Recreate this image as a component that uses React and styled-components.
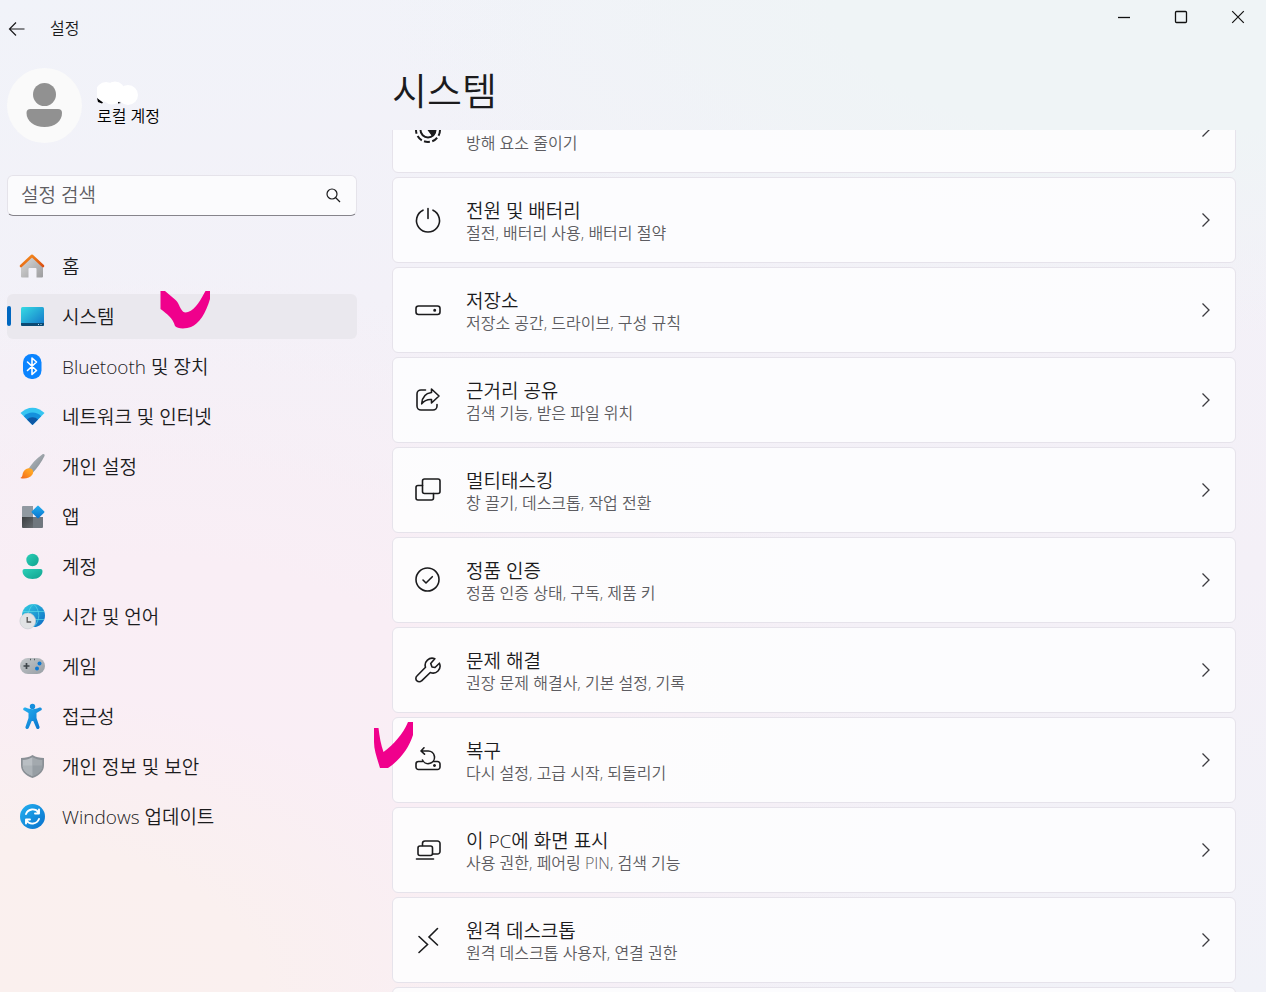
import React, { useEffect, useRef } from 'react';
import styled, { createGlobalStyle } from 'styled-components';

const GlobalStyle = createGlobalStyle`
  * {
    box-sizing: border-box;
  }
  body {
    margin: 0;
    color: #1b1b1d;
    font-family: "Open Sans", "Noto Sans CJK KR", sans-serif;
    font-weight: 350;
  }
  button, input {
    font: inherit;
    color: inherit;
  }
`;

const Window = styled.div`
  position: relative;
  display: flex;
  height: 100vh;
  overflow: hidden;
  background:
    radial-gradient(ellipse 520px 300px at 0% 100%, #faf0ee 0%, #faf0ef 50%, rgba(250, 240, 239, 0) 100%),
    radial-gradient(ellipse 760px 520px at 12% 80%, #faeef5 0%, #f9eef5 45%, rgba(249, 238, 245, 0) 100%),
    radial-gradient(ellipse 760px 340px at 90% 0%, #eff4f6 0%, #eff4f6 40%, rgba(239, 244, 246, 0) 100%),
    linear-gradient(170deg, #f1f3f9 0%, #f3f1f8 30%, #f4f0f7 65%, #f1f2f8 100%);
`;

const Sidebar = styled.aside`
  flex: none;
  width: 357px;
  padding-left: 7px;
`;

const TitleBar = styled.header`
  display: flex;
  align-items: center;
  gap: 23px;
  height: 56px;
  font-size: 16px;
`;

const AppName = styled.span`
  padding-bottom: 2px;
`;

const BackButton = styled.button`
  display: flex;
  padding: 0;
  border: 0;
  background: none;
`;

const Account = styled.div`
  display: flex;
  align-items: center;
  gap: 15px;
  margin-top: 12px;
  height: 75px;
`;

const AccountText = styled.div`
  display: flex;
  flex-direction: column;
  padding-bottom: 3px;
  font-size: 16px;
  line-height: 22px;
  color: #000;
`;

const SearchBox = styled.label`
  display: flex;
  align-items: center;
  margin-top: 32px;
  height: 41px;
  padding: 0 15px 2px 13px;
  border: 1px solid #e5e3ea;
  border-bottom-color: #86848b;
  border-radius: 6px;
  background: #fbfbfd;
`;

const SearchInput = styled.input`
  flex: 1;
  min-width: 0;
  padding: 0;
  border: 0;
  outline: 0;
  background: none;
  font-size: 19px;
  &::placeholder {
    color: #5f5e63;
    opacity: 1;
  }
`;

const Nav = styled.nav`
  display: flex;
  flex-direction: column;
  gap: 5px;
  margin-top: 28px;
`;

const NavItem = styled.a`
  display: flex;
  align-items: center;
  gap: 16px;
  height: 45px;
  padding-bottom: 2px;
  border-radius: 6px;
  font-size: 19px;
  color: inherit;
  text-decoration: none;
  background: ${props => (props.$active ? '#eae8ee' : 'none')};
  &::before {
    content: '';
    width: 4px;
    height: 20px;
    margin-right: -12px;
    border-radius: 2px;
    background: ${props => (props.$active ? '#0067c0' : 'none')};
  }
  svg {
    flex: none;
    margin-left: 3px;
  }
`;

const Main = styled.main`
  flex: 1;
  min-width: 0;
  display: flex;
  flex-direction: column;
  padding-left: 35px;
`;

const WindowControls = styled.div`
  display: flex;
  justify-content: flex-end;
  height: 34px;
`;

const ControlButton = styled.button`
  display: flex;
  align-items: center;
  justify-content: center;
  width: 57px;
  padding: 0;
  border: 0;
  background: none;
`;

const PageTitle = styled.h1`
  margin: 28px 0 12px;
  font-size: 38px;
  font-weight: 350;
  line-height: 56px;
`;

const CardList = styled.div`
  flex: 1;
  min-height: 0;
  display: flex;
  flex-direction: column;
  gap: 4px;
  padding-right: 30px;
  overflow-y: auto;
  scrollbar-width: none;
`;

const Card = styled.a`
  flex: none;
  display: flex;
  align-items: center;
  height: 86px;
  padding: 0 21px;
  border: 1px solid #e6e3eb;
  border-radius: 6px;
  background: rgba(253, 253, 254, 0.9);
  color: inherit;
  text-decoration: none;
`;

const CardText = styled.div`
  flex: 1;
  margin-left: 24px;
  padding-top: 2px;
`;

const CardTitle = styled.div`
  min-height: 24px;
  font-size: 19px;
  line-height: 24px;
`;

const CardInfo = styled.div`
  font-size: 16px;
  line-height: 20px;
  color: #5d5c61;
`;

const Mark = styled.svg`
  position: absolute;
  left: ${props => props.$x}px;
  top: ${props => props.$y}px;
  pointer-events: none;
`;

const HiddenDefs = styled.svg`
  position: absolute;
`;

const NavIcon = ({ children }) => (
  <svg width="28" height="28" viewBox="0 0 28 28" aria-hidden="true">{children}</svg>
);

const LineIcon = ({ children }) => (
  <svg width="28" height="28" viewBox="0 0 28 28" fill="none" stroke="#1b1b1d" strokeWidth="1.6"
    strokeLinecap="round" strokeLinejoin="round" aria-hidden="true">{children}</svg>
);

const Gradients = () => (
  <HiddenDefs width="0" height="0" aria-hidden="true">
    <defs>
      <linearGradient id="gray" x1="0" y1="0" x2="1" y2="1"><stop stopColor="#dcdcdc" /><stop offset="1" stopColor="#9c9c9e" /></linearGradient>
      <linearGradient id="steel" x1="0" y1="0" x2="1" y2="1"><stop stopColor="#b9bfc4" /><stop offset="1" stopColor="#7d858c" /></linearGradient>
      <linearGradient id="pad" x1="0" y1="0" x2="1" y2="1"><stop stopColor="#c3c7ca" /><stop offset="1" stopColor="#989fa5" /></linearGradient>
      <linearGradient id="roof" x1="0" y1="0" x2="1" y2="1"><stop stopColor="#f7921e" /><stop offset="1" stopColor="#dc4f12" /></linearGradient>
      <linearGradient id="paint" x1="0" y1="1" x2="1" y2="0"><stop stopColor="#f0641e" /><stop offset=".6" stopColor="#ff9a1f" /><stop offset="1" stopColor="#ffb02e" /></linearGradient>
      <linearGradient id="screen" x1="0" y1="0" x2="1" y2="1"><stop stopColor="#36dbe4" /><stop offset="1" stopColor="#1273c8" /></linearGradient>
      <linearGradient id="blue" x1="0" y1="0" x2="1" y2="1"><stop stopColor="#25b1f0" /><stop offset="1" stopColor="#0870cc" /></linearGradient>
      <linearGradient id="teal" x1="0" y1="0" x2="1" y2="1"><stop stopColor="#2bd0b8" /><stop offset="1" stopColor="#11a28e" /></linearGradient>
      <linearGradient id="globe" x1="0" y1="0" x2="1" y2="1"><stop stopColor="#35d0e2" /><stop offset="1" stopColor="#0c68c4" /></linearGradient>
      <linearGradient id="dark" x1="0" y1="0" x2="1" y2="1"><stop stopColor="#3b3e41" /><stop offset="1" stopColor="#666b70" /></linearGradient>
    </defs>
  </HiddenDefs>
);

const navItems = [
  {
    label: '홈',
    icon: <>
      <path d="M3 13 14 3.500 25 13V24.500a1 1 0 0 1-1 1h-5.500V17a1 1 0 0 0-1-1h-6a1 1 0 0 0-1 1v8.500H4a1 1 0 0 1-1-1z" fill="url(#gray)" />
      <path d="M3 14 14 3.800l11 10.200" fill="none" stroke="url(#roof)" strokeWidth="2.600" strokeLinecap="round" strokeLinejoin="round" />
    </>,
  },
  {
    label: '시스템',
    icon: <>
      <rect x="3" y="5" width="23" height="19" rx="1.500" fill="url(#screen)" />
      <path d="M3 21h23v1.500a1.500 1.500 0 0 1-1.500 1.500h-20A1.500 1.500 0 0 1 3 22.500z" fill="#0b4a73" />
      <path d="M20 22.500h1M22.500 22.500h1" stroke="#b8e4f5" />
    </>,
  },
  {
    label: 'Bluetooth 및 장치',
    icon: <>
      <rect x="5" y="2" width="18.500" height="25" rx="8.500" fill="#0a84ff" />
      <path d="M9.500 10l9 8.500-4.500 4V6l4.500 4-9 8.500" fill="none" stroke="#fff" strokeWidth="1.600" strokeLinejoin="round" strokeLinecap="round" />
    </>,
  },
  {
    label: '네트워크 및 인터넷',
    icon: <>
      <path d="M2.500 11a16.500 16.500 0 0 1 24 0L14.500 23z" fill="#36c5f1" />
      <path d="M5.800 14.300a12 12 0 0 1 17.400 0L14.500 23z" fill="#1590dc" />
      <path d="M9 17.500a7.700 7.700 0 0 1 11 0L14.500 23z" fill="#0d58a6" />
    </>,
  },
  {
    label: '개인 설정',
    icon: <>
      <path d="M10 17.500C14 12 18 6.500 24.500 2.300c1.500-1 2.700.3 2 1.700C23.500 10 19.500 15.500 15 20.500z" fill="url(#steel)" />
      <path d="M10.800 16.200c3.800-.3 5.400 3 3.800 6-2.500 4.300-8.700 5.100-12.300 3.800 2.400-1 1.900-2.500 2.600-4.900.9-3 3-4.700 5.900-4.900z" fill="url(#paint)" />
    </>,
  },
  {
    label: '앱',
    icon: <>
      <path d="M4 5a1 1 0 0 1 1-1h10v11H4z" fill="#9199a1" />
      <path d="M4 15h11v11H5a1 1 0 0 1-1-1z" fill="url(#dark)" />
      <path d="M15 15h10v10a1 1 0 0 1-1 1h-9z" fill="#70777e" />
      <rect x="15.200" y="5.200" width="9.600" height="9.600" rx="1" fill="url(#blue)" transform="rotate(45 20 10)" />
    </>,
  },
  {
    label: '계정',
    icon: <>
      <circle cx="14.500" cy="8" r="6.200" fill="url(#teal)" />
      <path d="M6.500 17h16a2 2 0 0 1 2 2c0 4.500-4 8-10 8s-10-3.500-10-8a2 2 0 0 1 2-2z" fill="url(#teal)" />
    </>,
  },
  {
    label: '시간 및 언어',
    icon: <>
      <circle cx="15.500" cy="13.500" r="11.500" fill="url(#globe)" />
      <path d="M5 9.500h21M5 17.500h21M15.500 2c-7 6-7 17 0 23M15.500 2c7 6 7 17 0 23" fill="none" stroke="#59d8e8" strokeWidth="1" opacity=".7" />
      <circle cx="9.800" cy="19" r="7.900" fill="#e1e3e5" stroke="#c5cbd0" strokeWidth=".6" />
      <path d="M9.200 15v5h4" fill="none" stroke="#555" strokeWidth="1.300" />
    </>,
  },
  {
    label: '게임',
    icon: <>
      <rect x="2" y="6" width="25" height="16" rx="8" fill="url(#pad)" />
      <path d="M5.500 14h6M8.500 11v6" stroke="#3e454a" strokeWidth="1.700" />
      <circle cx="21.500" cy="11.500" r="2" fill="#0f78d2" />
      <circle cx="19" cy="16.500" r="2" fill="#0f78d2" />
      <path d="M12 7.500h1M16 7.500h1" stroke="#555c61" strokeWidth="1.300" />
    </>,
  },
  {
    label: '접근성',
    icon: <>
      <circle cx="14.500" cy="4.500" r="2.700" fill="#168fdd" />
      <path d="M5.300 6.400c.5-1 1.400-1.200 2.300-.8 5 2.200 8.800 2.200 13.800 0 .9-.4 1.800-.2 2.300.8.4 1-.1 1.800-1 2.200L18.500 11v5l3 8.800c.3 1-.2 1.800-1 2.100-1 .3-1.900-.1-2.200-1L15.300 19h-1.600l-3 6.900c-.4.9-1.200 1.300-2.200 1-.8-.3-1.300-1.100-1-2.100l3-8.800v-5L6.300 8.600c-.9-.4-1.400-1.200-1-2.200z" fill="url(#blue)" />
    </>,
  },
  {
    label: '개인 정보 및 보안',
    icon: <>
      <path d="M14.500 3c3.500 2.200 7 3 11.500 3v7c0 6-4 10.500-11.500 13C7 23.500 3 19 3 13V6c4.500 0 8-.8 11.500-3z" fill="#8a9096" />
      <path d="M14.500 5.200c3 1.700 6 2.500 9.800 2.700V13c0 5-3.300 8.700-9.800 11z" fill="#a3a9ae" />
      <path d="M14.500 5.200C11.500 6.900 8.500 7.700 4.700 7.900V13c0 5 3.300 8.700 9.800 11z" fill="#b9bec3" />
      <path d="M4.700 13.500h9.800V24c-6.300-2.200-9.600-5.800-9.800-10.500z" fill="#adb3b8" />
      <path d="M14.500 13.500h9.800C24.100 18.200 20.800 21.800 14.500 24z" fill="#979ea4" />
    </>,
  },
  {
    label: 'Windows 업데이트',
    icon: <>
      <circle cx="14.500" cy="14.500" r="12.500" fill="url(#blue)" />
      <path d="M8 12a7.200 7.200 0 0 1 12.600-1.500M21 7.500v4h-4M21 17a7.200 7.200 0 0 1-12.600 1.500M8 21.500v-4h4" fill="none" stroke="#fff" strokeWidth="1.900" strokeLinecap="round" strokeLinejoin="round" />
    </>,
  },
];

const cards = [
  {
    info: '방해 요소 줄이기',
    icon: <>
      <circle cx="14" cy="14" r="12" strokeDasharray="6 2.400" strokeWidth="2" strokeLinecap="butt" />
      <circle cx="14" cy="14" r="7.500" strokeWidth="2" />
      <path d="M13 12l5.500 7.500c2-1.500 3-4 2.500-7.500z" fill="#1b1b1d" />
    </>,
  },
  {
    title: '전원 및 배터리',
    info: '절전, 배터리 사용, 배터리 절약',
    icon: <path d="M14 2.500v10M9 4.200a11.500 11.500 0 1 0 10 0" />,
  },
  {
    title: '저장소',
    info: '저장소 공간, 드라이브, 구성 규칙',
    icon: <>
      <rect x="2" y="10" width="24" height="8.500" rx="2.500" />
      <circle cx="20.700" cy="14.200" r=".7" fill="#1b1b1d" />
    </>,
  },
  {
    title: '근거리 공유',
    info: '검색 기능, 받은 파일 위치',
    icon: <>
      <path d="M11.500 4H7A4 4 0 0 0 3 8v12a4 4 0 0 0 4 4h12a4 4 0 0 0 4-4v-1.500" />
      <path d="M17.500 3l7.500 7-7.500 7v-3.500c-4-.3-7.200 1-9.800 4.300C8 11.500 11.500 7.300 17.500 6.500z" />
    </>,
  },
  {
    title: '멀티태스킹',
    info: '창 끌기, 데스크톱, 작업 전환',
    icon: <>
      <rect x="8.500" y="3" width="17.500" height="14.500" rx="2" />
      <path d="M8.500 9.500H4a2 2 0 0 0-2 2V22a2 2 0 0 0 2 2h13.500a2 2 0 0 0 2-2v-4.500" />
    </>,
  },
  {
    title: '정품 인증',
    info: '정품 인증 상태, 구독, 제품 키',
    icon: <>
      <circle cx="13.500" cy="13.500" r="11.500" />
      <path d="M9 14l3 3 6.300-6.300" />
    </>,
  },
  {
    title: '문제 해결',
    info: '권장 문제 해결사, 기본 설정, 기록',
    icon: <path d="M20.800 2.700a7 7 0 0 0-9.300 8.600L2.900 20a3.300 3.300 0 0 0 0 4.800 3.300 3.300 0 0 0 4.700 0l8.700-8.300a7 7 0 0 0 9.100-9.300L21 11.500 18 11l-1.300-3.500z" />,
  },
  {
    title: '복구',
    info: '다시 설정, 고급 시작, 되돌리기',
    icon: <>
      <path d="M8.500 15.500h-4A2.500 2.500 0 0 0 2 18v3a2.500 2.500 0 0 0 2.500 2.500h19A2.500 2.500 0 0 0 26 21v-3a2.500 2.500 0 0 0-2.500-2.500h-4" />
      <path d="M10 1.800L7 5l3.500 3.200M7.500 5H14a6.300 6.300 0 1 1-5.500 9" />
      <circle cx="20.500" cy="19.500" r=".7" fill="#1b1b1d" />
    </>,
  },
  {
    title: '이 PC에 화면 표시',
    info: '사용 권한, 페어링 PIN, 검색 기능',
    icon: <>
      <path d="M8.500 9.500V7.500A2.500 2.500 0 0 1 11 5h12.500A2.500 2.500 0 0 1 26 7.500v8a2.500 2.500 0 0 1-2.500 2.500h-5" />
      <rect x="4" y="10" width="14.500" height="9.500" rx="2" />
      <path d="M2.500 23h17" />
    </>,
  },
  {
    title: '원격 데스크톱',
    info: '원격 데스크톱 사용자, 연결 권한',
    icon: <path d="M5 10.500l8.500 8L5 26.500M23.500 2.500L15 11l8.500 8" strokeLinejoin="miter" />,
  },
  {},
];

function App() {
  const listRef = useRef(null);

  // list opens already scrolled half a card down
  useEffect(() => {
    listRef.current.scrollTop = 43;
  }, []);

  return (
    <>
      <GlobalStyle />
      <Gradients />
      <Window>
        <Sidebar>
          <TitleBar>
            <BackButton aria-label="뒤로">
              <svg width="20" height="20" viewBox="0 0 20 20" fill="none" stroke="#1b1b1d" strokeWidth="1.200">
                <path d="M17.500 11h-15M9 4.500L2.500 11 9 17.500" />
              </svg>
            </BackButton>
            <AppName>설정</AppName>
          </TitleBar>
          <Account>
            <svg width="75" height="75" viewBox="0 0 75 75" aria-hidden="true">
              <circle cx="37.500" cy="37.500" r="37.500" fill="#fafafa" />
              <circle cx="37.500" cy="26.500" r="11.500" fill="#919191" />
              <path d="M24 41h27a4 4 0 0 1 4 4c0 8-7 14-17.500 14S19.500 53 19.500 45a4 4 0 0 1 4-4z" fill="#919191" />
            </svg>
            <AccountText>
              <svg width="42" height="24" viewBox="0 0 42 24" aria-hidden="true">
                <path d="M0 17l6 4.500-1 1-4-1.500zM21 20.500l3 1.500-3 .5z" fill="#000" />
                <circle cx="9" cy="11" r="10" fill="#fff" />
                <circle cx="18" cy="10.500" r="10" fill="#fff" />
                <circle cx="15" cy="14" r="9.500" fill="#fff" />
                <circle cx="31" cy="14" r="10" fill="#fff" />
              </svg>
              <span>로컬 계정</span>
            </AccountText>
          </Account>
          <SearchBox>
            <SearchInput type="text" placeholder="설정 검색" aria-label="설정 검색" />
            <svg width="16" height="16" viewBox="0 0 16 16" fill="none" stroke="#1b1b1d" strokeWidth="1.200" aria-hidden="true">
              <circle cx="7" cy="7" r="5" />
              <path d="M10.500 10.500L15 15" />
            </svg>
          </SearchBox>
          <Nav>
            {navItems.map(item => (
              <NavItem key={item.label} href="#" $active={item.label === '시스템'}>
                <NavIcon>{item.icon}</NavIcon>
                <span>{item.label}</span>
              </NavItem>
            ))}
          </Nav>
        </Sidebar>
        <Main>
          <WindowControls>
            <ControlButton aria-label="최소화">
              <svg width="14" height="14" viewBox="0 0 14 14"><path d="M1 7.500h12" stroke="#111" strokeWidth="1.300" /></svg>
            </ControlButton>
            <ControlButton aria-label="최대화">
              <svg width="14" height="14" viewBox="0 0 14 14"><rect x="1.500" y="1.500" width="11" height="11" rx="1" fill="none" stroke="#111" strokeWidth="1.300" /></svg>
            </ControlButton>
            <ControlButton aria-label="닫기">
              <svg width="14" height="14" viewBox="0 0 14 14"><path d="M1.200 1.200l11.600 11.600M12.800 1.200L1.200 12.800" stroke="#111" strokeWidth="1.200" /></svg>
            </ControlButton>
          </WindowControls>
          <PageTitle>시스템</PageTitle>
          <CardList ref={listRef}>
            {cards.map((card, i) => (
              <Card key={i} href="#">
                <LineIcon>{card.icon}</LineIcon>
                <CardText>
                  <CardTitle>{card.title}</CardTitle>
                  <CardInfo>{card.info}</CardInfo>
                </CardText>
                <svg width="16" height="16" viewBox="0 0 16 16" fill="none" stroke="#3c3b40" strokeWidth="1.300" aria-hidden="true">
                  <path d="M4.500 1.500L11 8l-6.500 6.500" />
                </svg>
              </Card>
            ))}
          </CardList>
        </Main>
        <Mark $x={160} $y={290} width="50" height="39" viewBox="0 0 50 39" aria-hidden="true">
          <path d="M.5 1H5l10 8.500c4 3.500 4 6.500 6 9.500 2 3.500 4 4 7 3 8-2.500 13-13 17.500-21H50v8C46 23 39 34 31 37c-5 2-14 2-16-1-2-8-8-12-14.500-17z" fill="#f0008c" />
        </Mark>
        <Mark $x={374} $y={722} width="40" height="48" viewBox="0 0 40 48" aria-hidden="true">
          <path d="M0 6h4.500c1 9 2.500 17 5 24C20 22 29 12 34 0h5v13c-4 13-13 25-25 33H6C3 36 0 28 0 20z" fill="#f0008c" />
        </Mark>
      </Window>
    </>
  );
}

export default App;
